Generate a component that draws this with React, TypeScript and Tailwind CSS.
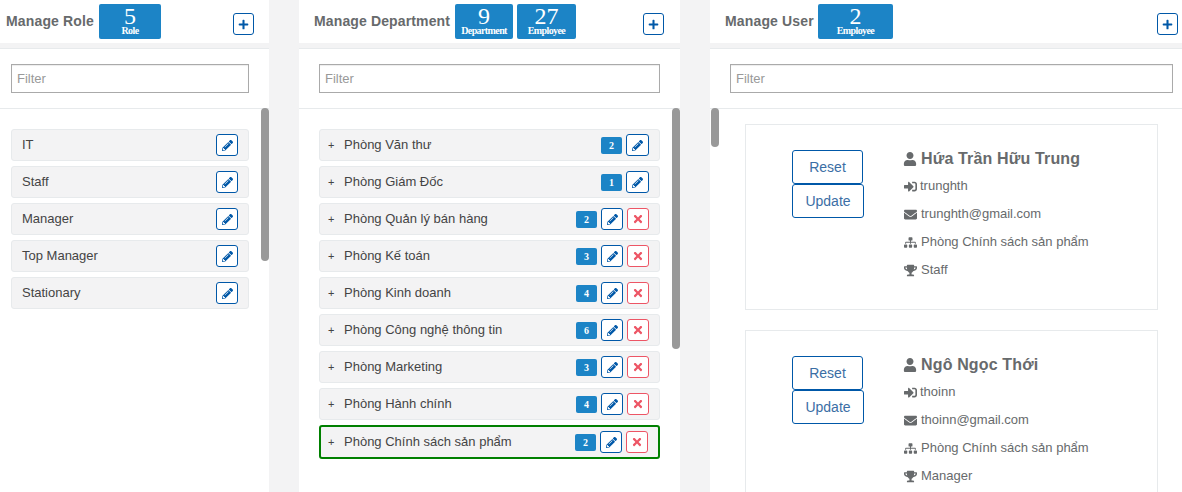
import { FaEnvelope, FaPencilAlt, FaPlus, FaSignInAlt, FaSitemap, FaTimes, FaTrophy, FaUser } from 'react-icons/fa'

const roles = ['IT', 'Staff', 'Manager', 'Top Manager', 'Stationary']

const departments = [
  { name: 'Phòng Văn thư', count: 2, locked: true },
  { name: 'Phòng Giám Đốc', count: 1, locked: true },
  { name: 'Phòng Quản lý bán hàng', count: 2 },
  { name: 'Phòng Kế toán', count: 3 },
  { name: 'Phòng Kinh doanh', count: 4 },
  { name: 'Phòng Công nghệ thông tin', count: 6 },
  { name: 'Phòng Marketing', count: 3 },
  { name: 'Phòng Hành chính', count: 4 },
  { name: 'Phòng Chính sách sản phẩm', count: 2, active: true },
]

const users = [
  { name: 'Hứa Trần Hữu Trung', login: 'trunghth', mail: 'trunghth@gmail.com', dept: 'Phòng Chính sách sản phẩm', role: 'Staff' },
  { name: 'Ngô Ngọc Thới', login: 'thoinn', mail: 'thoinn@gmail.com', dept: 'Phòng Chính sách sản phẩm', role: 'Manager' },
]

function Stat({ value, label, width }: { value: number; label: string; width: string }) {
  return (
    <div className={`${width} h-[35px] shrink-0 rounded-[2px] bg-[#1c84c6] pt-[2px] text-center text-white font-['Liberation_Serif',serif]`}>
      <div className="text-[24px] leading-[20px]">{value}</div>
      <div className="text-[10px] font-bold leading-[9px] tracking-[-0.6px]">{label}</div>
    </div>
  )
}

function AddButton() {
  return (
    <button className="flex h-[22px] w-[21px] shrink-0 items-center justify-center rounded-[3px] border border-[#0058a8] bg-white text-[#0058a8]">
      <FaPlus size={11} />
    </button>
  )
}

function EditButton({ wide }: { wide?: boolean }) {
  return (
    <button className={`flex h-[22px] ${wide ? 'w-[23px]' : 'w-[22px]'} shrink-0 items-center justify-center rounded-[3px] border border-[#0058a8] bg-white text-[#0058a8]`}>
      <FaPencilAlt size={11} />
    </button>
  )
}

function Filter({ className }: { className: string }) {
  return (
    <div className={`flex h-[61px] shrink-0 items-center border-t border-b border-[#e7eaec] ${className}`}>
      <input
        placeholder="Filter"
        className="h-[29px] w-full border border-[#aaaaaa] px-[5px] text-[13px] text-[#555] shadow-[inset_0_1px_1px_rgba(0,0,0,0.075)] outline-none placeholder:text-[#999]"
      />
    </div>
  )
}

function Scrollbar({ className }: { className: string }) {
  return <div className={`absolute top-[108px] w-[8px] rounded-[4px] bg-[#999999] ${className}`} />
}

function Row({ active, children }: { active?: boolean; children: React.ReactNode }) {
  return (
    <div
      className={
        active
          ? 'flex h-[34px] items-center rounded-[3px] border-2 border-[#008000] bg-[#f3f3f4] text-[13px] text-[#444]'
          : 'flex h-[32px] items-center rounded-[3px] border border-[#e7eaec] bg-[#f3f3f4] text-[13px] text-[#444]'
      }
    >
      {children}
    </div>
  )
}

function RolePanel() {
  return (
    <section className="relative flex w-[269px] shrink-0 flex-col bg-white">
      <header className="flex h-[43px] shrink-0 items-start bg-white pl-[6px]">
        <h2 className="mt-[13px] w-[93px] text-[14px] leading-[16px] font-bold tracking-[0.15px] text-[#676a6c]">Manage Role</h2>
        <div className="mt-[4px]"><Stat value={5} label="Role" width="w-[62px]" /></div>
        <div className="ml-[72px] mt-[13px]"><AddButton /></div>
      </header>
      <div className="h-[5px] shrink-0 bg-[#f3f3f4]" />
      <Filter className="pl-[11px] pr-[20px]" />
      <div className="flex flex-col gap-[5px] pl-[11px] pr-[20px] pt-[20px]">
        {roles.map((role) => (
          <Row key={role}>
            <span className="ml-[10px] flex-1">{role}</span>
            <span className="mr-[10px]"><EditButton /></span>
          </Row>
        ))}
      </div>
      <Scrollbar className="left-[261px] h-[153px]" />
    </section>
  )
}

function DepartmentPanel() {
  return (
    <section className="relative flex w-[381px] shrink-0 flex-col bg-white">
      <header className="flex h-[43px] shrink-0 items-start bg-white pl-[15px]">
        <h2 className="mt-[13px] w-[141px] text-[14px] leading-[16px] font-bold tracking-[0.13px] text-[#676a6c]">Manage Department</h2>
        <div className="mt-[4px] flex gap-[4px]">
          <Stat value={9} label="Department" width="w-[58px]" />
          <Stat value={27} label="Employee" width="w-[59px]" />
        </div>
        <div className="ml-[67px] mt-[13px]"><AddButton /></div>
      </header>
      <div className="h-[5px] shrink-0 bg-[#f3f3f4]" />
      <Filter className="px-[20px]" />
      <div className="flex flex-col gap-[5px] px-[20px] pt-[20px]">
        {departments.map((dept) => (
          <Row key={dept.name} active={dept.active}>
            <span className={dept.active ? 'ml-[7px] w-[16px] text-[11px]' : 'ml-[8px] w-[16px] text-[11px]'}>+</span>
            <span className="flex-1">{dept.name}</span>
            <span className="flex h-[17px] w-[21px] items-center justify-center rounded-[2px] bg-[#1c84c6] font-['Liberation_Serif',serif] text-[10px] font-bold text-white">
              {dept.count}
            </span>
            <span className={dept.locked ? 'ml-[4px] mr-[10px]' : 'ml-[4px]'}><EditButton wide={dept.locked} /></span>
            {!dept.locked && (
              <button className="ml-[4px] mr-[10px] flex h-[22px] w-[22px] shrink-0 items-center justify-center rounded-[3px] border border-[#ed5565] bg-white text-[#ed5565]">
                <FaTimes size={12} />
              </button>
            )}
          </Row>
        ))}
      </div>
      <Scrollbar className="left-[373px] h-[241px]" />
    </section>
  )
}

function UserLine({ icon, text, narrow }: { icon: React.ReactNode; text: string; narrow?: boolean }) {
  return (
    <div className={`flex h-[28px] items-center text-[13px] text-[#676a6c] ${narrow ? 'gap-[3px]' : 'gap-[4px]'}`}>
      <span className="flex w-[14px] justify-center text-[#676a6c]">{icon}</span>
      <span>{text}</span>
    </div>
  )
}

function UserCard({ user }: { user: (typeof users)[number] }) {
  return (
    <article className="flex h-[186px] shrink-0 border border-[#e7eaec] bg-white pl-[46px] pt-[25px]">
      <div className="flex w-[111px] shrink-0 flex-col items-start">
        <button className="h-[34px] w-[71px] rounded-[3px] border border-[#0058a8] bg-white text-[14px] text-[#3b6ea5]">Reset</button>
        <button className="h-[34px] w-[72px] rounded-[3px] border border-[#0058a8] bg-white text-[14px] text-[#3b6ea5]">Update</button>
      </div>
      <div>
        <h3 className="flex h-[18px] items-center gap-[4px] text-[16px] font-bold tracking-[0.15px] text-[#676a6c]">
          <FaUser size={14} />
          {user.name}
        </h3>
        <div className="mt-[4px]">
          <UserLine narrow icon={<FaSignInAlt size={13} />} text={user.login} />
          <UserLine icon={<FaEnvelope size={13} />} text={user.mail} />
          <UserLine icon={<FaSitemap size={13} />} text={user.dept} />
          <UserLine icon={<FaTrophy size={13} />} text={user.role} />
        </div>
      </div>
    </article>
  )
}

function UserPanel() {
  return (
    <section className="relative flex min-w-0 flex-1 flex-col bg-white">
      <header className="flex h-[43px] shrink-0 items-start bg-white pl-[15px]">
        <h2 className="mt-[13px] w-[93px] text-[14px] leading-[16px] font-bold tracking-[0.15px] text-[#676a6c]">Manage User</h2>
        <div className="mt-[4px]"><Stat value={2} label="Employee" width="w-[75px]" /></div>
        <div className="ml-auto mr-[4px] mt-[13px]"><AddButton /></div>
      </header>
      <div className="h-[5px] shrink-0 bg-[#f3f3f4]" />
      <Filter className="pl-[20px] pr-[9px]" />
      <div className="flex flex-col gap-[20px] pl-[35px] pr-[24px] pt-[15px]">
        {users.map((user) => (
          <UserCard key={user.login} user={user} />
        ))}
      </div>
      <Scrollbar className="left-[1px] h-[39px]" />
    </section>
  )
}

export default function App() {
  return (
    <div className="flex h-[492px] w-[1182px] gap-[30px] overflow-hidden bg-[#f3f3f4] font-['Liberation_Sans',Arial,sans-serif]">
      <RolePanel />
      <DepartmentPanel />
      <UserPanel />
    </div>
  )
}
